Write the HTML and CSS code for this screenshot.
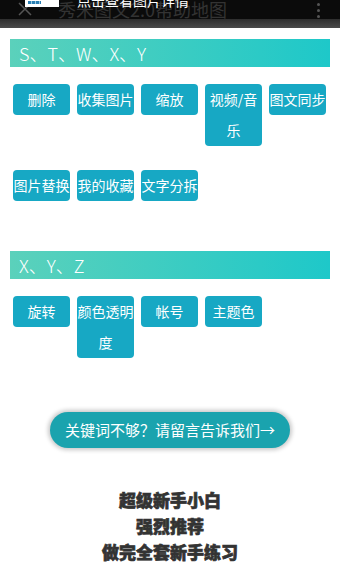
FILE: index.html
```html
<!DOCTYPE html>
<html lang="zh">
<head>
<meta charset="utf-8">
<link rel="stylesheet" href="styles.css">
</head>
<body>
<div class="topbar">
  <div class="bar-black">
    <svg class="close" width="14" height="14" viewBox="0 0 14 14"><path d="M1 1 L13 13 M13 1 L1 13" stroke="#555" stroke-width="1.5"/></svg>
    <span class="title-bg">秀米图文2.0帮助地图</span>
    <div class="thumb"><span class="stripe"></span></div>
    <span class="title-fg">点击查看图片详情</span>
    <span class="dots"><i></i><i></i><i></i></span>
  </div>
  <div class="bar-gray"></div>
</div>

<section class="section">
  <div class="head">S、T、W、X、Y</div>
  <div class="btns">
    <span class="btn">删除</span>
    <span class="btn">收集图片</span>
    <span class="btn">缩放</span>
    <span class="btn">视频/音乐</span>
    <span class="btn">图文同步</span>
    <span class="btn">图片替换</span>
    <span class="btn">我的收藏</span>
    <span class="btn">文字分拆</span>
  </div>
</section>

<section class="section second">
  <div class="head">X、Y、Z</div>
  <div class="btns">
    <span class="btn">旋转</span>
    <span class="btn">颜色透明度</span>
    <span class="btn">帐号</span>
    <span class="btn">主题色</span>
  </div>
</section>

<div class="cta-wrap"><span class="cta">关键词不够？请留言告诉我们→</span></div>

<div class="promo">
  <p>超级新手小白</p>
  <p>强烈推荐</p>
  <p>做完全套新手练习</p>
</div>
</body>
</html>
```
FILE: styles.css
```css
* { box-sizing: border-box; }
html, body { margin: 0; padding: 0; }
body {
  width: 340px;
  height: 564px;
  overflow: hidden;
  background: #fff;
  font-family: "Noto Sans CJK SC", "Noto Sans", sans-serif;
}
.topbar { height: 28px; }
.bar-black {
  position: relative;
  height: 19px;
  background: #0b0b0b;
  overflow: hidden;
}
.bar-gray {
  height: 9px;
  background: linear-gradient(#2e2e2e, #4a4a4a);
}
.close { position: absolute; left: 18px; top: 2px; }
.title-bg {
  position: absolute;
  left: 58px;
  top: -1px;
  font-size: 18px;
  line-height: 20px;
  color: #333;
}
.thumb {
  position: absolute;
  left: 25px;
  top: 0;
  width: 34px;
  height: 7px;
  background: #fff;
}
.stripe {
  position: absolute;
  left: 3px;
  top: 1px;
  width: 13px;
  height: 3px;
  background: repeating-linear-gradient(90deg, #2a7fb3 0 3px, #9ccbe3 3px 4px);
}
.title-fg {
  position: absolute;
  left: 77px;
  top: -9px;
  font-size: 14px;
  line-height: 18px;
  color: #fff;
}
.dots {
  position: absolute;
  right: 20px;
  top: 3px;
  display: flex;
  flex-direction: column;
  gap: 3px;
}
.dots i { width: 3px; height: 3px; border-radius: 50%; background: #555; display: block; }

.section { padding: 11px 10px 0; }
.second { padding-top: 50px; }
.head {
  height: 28px;
  background: linear-gradient(90deg, #5bd1bb, #1ec8c9);
  color: #fff;
  font-size: 18px;
  line-height: 28px;
  padding-left: 9px;
  font-weight: 300;
}
.btns {
  display: flex;
  flex-wrap: wrap;
  align-items: flex-start;
  column-gap: 7px;
  row-gap: 24px;
  padding: 17px 3px 0;
}
.btn {
  width: 57px;
  background: #17a8c4;
  color: #fff;
  font-size: 14px;
  line-height: 31px;
  text-align: center;
  border-radius: 4px;
  word-break: break-all;
}
.cta-wrap {
  display: flex;
  justify-content: center;
  padding-top: 54px;
}
.cta {
  width: 240px;
  height: 36px;
  border-radius: 18px;
  background: #1aa3ae;
  color: #fff;
  font-size: 15px;
  line-height: 36px;
  text-align: center;
  box-shadow: 0 0 4px 2px rgba(0,0,0,0.22);
}
.promo {
  text-align: center;
  padding-top: 39px;
  color: #333;
  font-size: 17px;
  font-weight: 900;
  line-height: 26px;
  -webkit-text-stroke: 0.7px #333;
}
.promo p { margin: 0; }
```
